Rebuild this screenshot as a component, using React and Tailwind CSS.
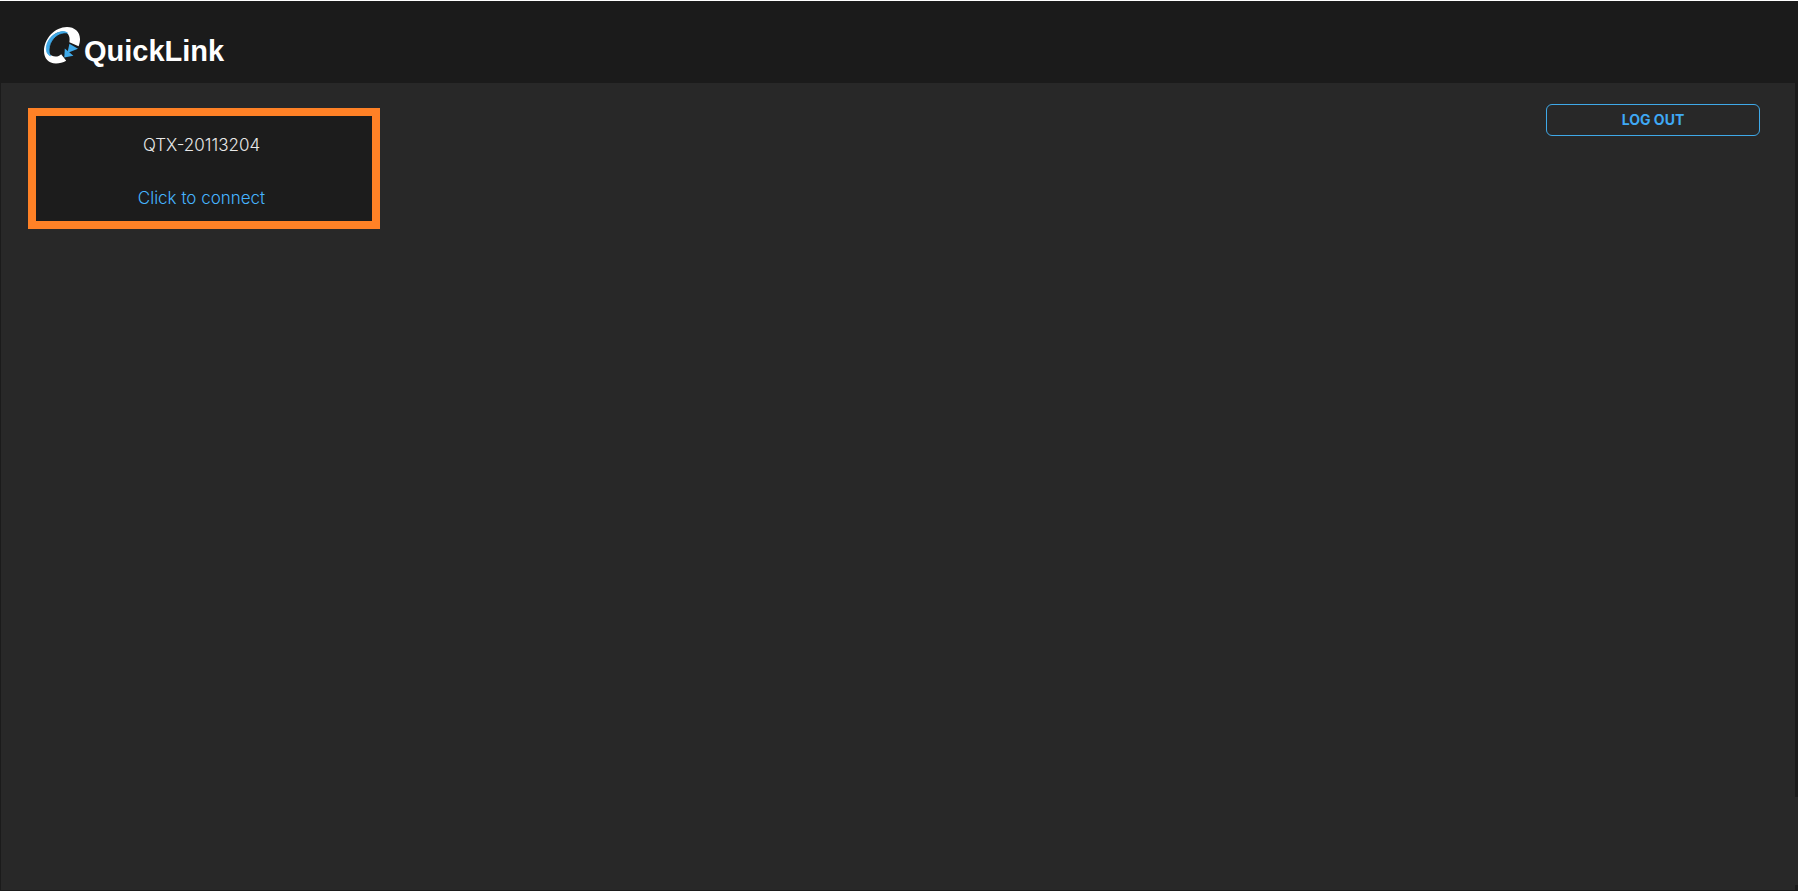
import React from 'react';

const devices = [{ id: 'QTX-20113204', action: 'Click to connect' }];

function LogoMark() {
  return (
    <svg width="38" height="38" viewBox="0 0 38 38" aria-hidden="true">
      <path
        d="M24 0C31.500 0 37 4.800 37 12C37 14.600 36.500 17 35.600 19.200L26.400 15.200C27.500 9 24.500 4.600 19.500 4.600C11 5 4 13 4 20.500C4 25.500 7.500 29.500 12.500 29.500C15 29.500 16.500 28.600 18.200 27.200L23.200 33.800C20 35.600 16.500 36.400 13 36.400C5.500 36.400 1 31.500 1 24C1 11.500 12 0 24 0Z"
        fill="#ffffff"
      />
      <path
        d="M24.500 6C22.500 4.600 20.500 4.300 18 4.800C9.500 6.300 3.300 14 3.300 21.500C3.300 25 4.500 27.600 7.500 29C6.300 26.800 5.900 24.600 6.100 22C6.600 14.500 12.500 7.500 18.800 6.300C20.800 5.800 22.800 5.600 24.500 6Z"
        fill="#3fa9e8"
        stroke="#3fa9e8"
        strokeWidth="0.8"
      />
      <path d="M26.400 16.800L35 21.800L24.400 26Z" fill="#3fa9e8" />
      <path d="M21.800 21.600L30.400 28.800L21.300 30.600Z" fill="#3fa9e8" />
    </svg>
  );
}

function DeviceCard({ id, action }) {
  return (
    <section className="flex w-88 flex-col items-center border-8 border-[#ff8126] bg-[#1c1c1c] pt-[17px] pr-[5px] pb-[11px] text-[17px] leading-6 font-light">
      <h2 className="text-[#e8e8e8]">{id}</h2>
      <a href="#connect" className="mt-[29px] text-[#46b4ff]">
        {action}
      </a>
    </section>
  );
}

export default function App() {
  return (
    <div className="flex min-h-screen border-t border-t-white bg-[#282828] font-['Inter',sans-serif]">
      <div className="flex flex-1 flex-col border-b border-l border-[#1b1b1b]">
        {/* Top bar */}
        <header className="flex h-[82px] items-center bg-[#1b1b1b] px-[42px] pt-2">
          <a href="#home" className="flex items-center text-white">
            <LogoMark />
            <span className="pt-2.5 pl-[3px] font-['Liberation_Sans',sans-serif] text-[29px] leading-8 font-bold">
              QuickLink
            </span>
          </a>
        </header>

        <main className="flex items-start justify-between pt-[21px] pr-[35px] pl-[27px]">
          <div className="pt-1">
            {devices.map((device) => (
              <DeviceCard key={device.id} {...device} />
            ))}
          </div>
          <button
            type="button"
            className="h-8 w-[214px] rounded-md border border-[#3fa9e8] text-sm font-bold text-[#3fa9f5]"
          >
            LOG OUT
          </button>
        </main>
      </div>

      {/* Scrollbar */}
      <div className="flex w-[3px] flex-col">
        <div className="flex-1 bg-[#1b1b1b]" />
        <div className="h-[88px]" />
        <div className="h-1.5 bg-[#1b1b1b]" />
      </div>
    </div>
  );
}
